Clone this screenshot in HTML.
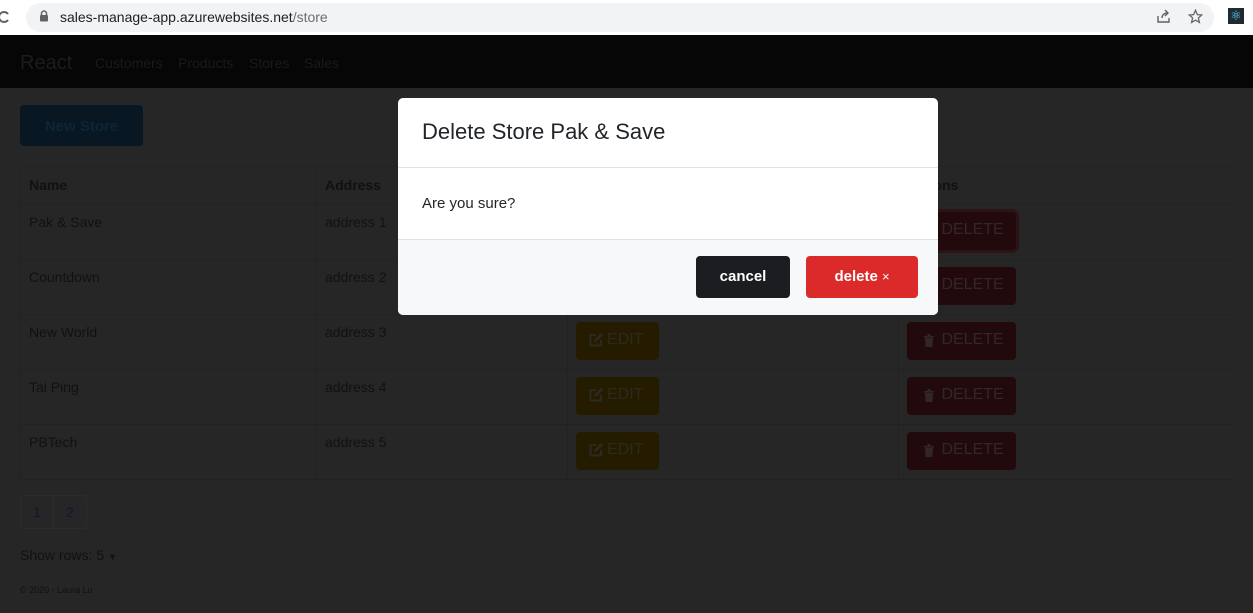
<!DOCTYPE html>
<html><head><style>
*{margin:0;padding:0;box-sizing:border-box}
body{width:1253px;height:613px;overflow:hidden;background:#262626;font-family:"Liberation Sans",sans-serif;position:relative}
.abs{position:absolute}
.top{left:0;top:0;width:1253px;height:35px;background:#fff}
.url{left:26px;top:3px;width:1188px;height:29px;background:#f1f3f4;border-radius:15px}
.nav{left:0;top:35px;width:1253px;height:53px;background:#060606}
.t{color:#111;font-size:14px}
.hl{background:#222;height:1px}
.vl{background:#222;width:1px}
.edit{background:#251c00;border-radius:4px;width:83px;height:38px;color:#2c2a20;font-size:16px;padding:9px 0 0 13px}
.edit svg,.del svg{vertical-align:-3px;margin-right:3px}
.del{background:#220a0c;border-radius:4px;width:109px;height:38px;color:#332628;font-size:16px;padding:9px 0 0 17px}
</style></head><body>
<div class="abs top"></div>
<svg class="abs" style="left:0;top:10px" width="10" height="14" viewBox="0 0 10 14"><path d="M8 4A5 5 0 1 0 8 10" stroke="#5f6368" stroke-width="2" fill="none"/></svg>
<div class="abs url"></div>
<svg class="abs" style="left:39px;top:10px" width="10" height="12" viewBox="0 0 10 12"><path d="M2.5 5V3.5a2.5 2.5 0 0 1 5 0V5" stroke="#5f6368" stroke-width="1.5" fill="none"/><rect x="1" y="5" width="8" height="6.5" rx="1" fill="#5f6368"/></svg>
<div class="abs" style="left:60px;top:9px;font-size:14px;color:#202124">sales-manage-app.azurewebsites.net<span style="color:#6b6e72">/store</span></div>
<svg class="abs" style="left:1156px;top:9px" width="15" height="15" viewBox="0 0 15 15"><path d="M2 7v6h11V9M6 9c0-3 2-5 6-5M9 1l3 3-3 3" stroke="#5f6368" stroke-width="1.4" fill="none"/></svg>
<svg class="abs" style="left:1188px;top:9px" width="15" height="15" viewBox="0 0 24 24"><path d="M12 2l3 7 7 .6-5.4 4.7 1.7 7.2L12 17.8 5.7 21.5l1.7-7.2L2 9.6 9 9z" stroke="#5f6368" stroke-width="2" fill="none"/></svg>
<div class="abs" style="left:1228px;top:8px;width:16px;height:16px;background:#1f2a33;color:#61dafb;font-size:13px;text-align:center;line-height:16px">⚛</div>
<div class="abs nav"></div>
<div class="abs" style="left:20px;top:52px;font-size:20px;color:#1c1c1c">React</div>
<div class="abs" style="left:95px;top:55px;font-size:14px;color:#1a1a1a">Customers</div>
<div class="abs" style="left:178px;top:55px;font-size:14px;color:#1a1a1a">Products</div>
<div class="abs" style="left:249px;top:55px;font-size:14px;color:#1a1a1a">Stores</div>
<div class="abs" style="left:304px;top:55px;font-size:14px;color:#1a1a1a">Sales</div>
<div class="abs" style="left:20px;top:105px;width:123px;height:41px;background:#081722;border-radius:4px;color:#0c2638;font-weight:bold;font-size:15px;text-align:center;line-height:43px">New Store</div>
<div class="abs hl" style="left:20px;top:166px;width:1213px"></div>
<div class="abs hl" style="left:20px;top:203px;width:1213px"></div>
<div class="abs hl" style="left:20px;top:259px;width:1213px"></div>
<div class="abs hl" style="left:20px;top:314px;width:1213px"></div>
<div class="abs hl" style="left:20px;top:369px;width:1213px"></div>
<div class="abs hl" style="left:20px;top:424px;width:1213px"></div>
<div class="abs hl" style="left:20px;top:479px;width:1213px"></div>
<div class="abs vl" style="left:20px;top:166px;height:314px"></div>
<div class="abs vl" style="left:316px;top:166px;height:314px"></div>
<div class="abs vl" style="left:567px;top:166px;height:314px"></div>
<div class="abs vl" style="left:898px;top:166px;height:314px"></div>
<div class="abs t" style="left:29px;top:177px;font-weight:bold">Name</div>
<div class="abs t" style="left:325px;top:177px;font-weight:bold">Address</div>
<div class="abs t" style="left:907px;top:177px;font-weight:bold">Actions</div>
<div class="abs t" style="left:29px;top:214px">Pak &amp; Save</div><div class="abs t" style="left:325px;top:214px">address 1</div>
<div class="abs t" style="left:29px;top:269px">Countdown</div><div class="abs t" style="left:325px;top:269px">address 2</div>
<div class="abs t" style="left:29px;top:324px">New World</div><div class="abs t" style="left:325px;top:324px">address 3</div>
<div class="abs t" style="left:29px;top:379px">Tai Ping</div><div class="abs t" style="left:325px;top:379px">address 4</div>
<div class="abs t" style="left:29px;top:434px">PBTech</div><div class="abs t" style="left:325px;top:434px">address 5</div>
<div class="abs edit" style="left:576px;top:212px"><svg width="15" height="15" viewBox="0 0 15 15"><path d="M7 3H1.5v10.5H12V8" stroke="#2c2a20" stroke-width="2" fill="none"/><path d="M5 10l1-3 6-6 2 2-6 6z" fill="#2c2a20"/></svg>EDIT</div>
<div class="abs edit" style="left:576px;top:267px"><svg width="15" height="15" viewBox="0 0 15 15"><path d="M7 3H1.5v10.5H12V8" stroke="#2c2a20" stroke-width="2" fill="none"/><path d="M5 10l1-3 6-6 2 2-6 6z" fill="#2c2a20"/></svg>EDIT</div>
<div class="abs edit" style="left:576px;top:322px"><svg width="15" height="15" viewBox="0 0 15 15"><path d="M7 3H1.5v10.5H12V8" stroke="#2c2a20" stroke-width="2" fill="none"/><path d="M5 10l1-3 6-6 2 2-6 6z" fill="#2c2a20"/></svg>EDIT</div>
<div class="abs edit" style="left:576px;top:377px"><svg width="15" height="15" viewBox="0 0 15 15"><path d="M7 3H1.5v10.5H12V8" stroke="#2c2a20" stroke-width="2" fill="none"/><path d="M5 10l1-3 6-6 2 2-6 6z" fill="#2c2a20"/></svg>EDIT</div>
<div class="abs edit" style="left:576px;top:432px"><svg width="15" height="15" viewBox="0 0 15 15"><path d="M7 3H1.5v10.5H12V8" stroke="#2c2a20" stroke-width="2" fill="none"/><path d="M5 10l1-3 6-6 2 2-6 6z" fill="#2c2a20"/></svg>EDIT</div>
<div class="abs del" style="left:907px;top:212px;box-shadow:0 0 0 3px #2c1416"><svg width="10" height="13" viewBox="0 0 10 13"><path d="M0 2h10v1.5H0zM3.5 0h3v2h-3zM1 4h8l-.6 9H1.6z" fill="#332628"/></svg> DELETE</div>
<div class="abs del" style="left:907px;top:267px"><svg width="10" height="13" viewBox="0 0 10 13"><path d="M0 2h10v1.5H0zM3.5 0h3v2h-3zM1 4h8l-.6 9H1.6z" fill="#332628"/></svg> DELETE</div>
<div class="abs del" style="left:907px;top:322px"><svg width="10" height="13" viewBox="0 0 10 13"><path d="M0 2h10v1.5H0zM3.5 0h3v2h-3zM1 4h8l-.6 9H1.6z" fill="#332628"/></svg> DELETE</div>
<div class="abs del" style="left:907px;top:377px"><svg width="10" height="13" viewBox="0 0 10 13"><path d="M0 2h10v1.5H0zM3.5 0h3v2h-3zM1 4h8l-.6 9H1.6z" fill="#332628"/></svg> DELETE</div>
<div class="abs del" style="left:907px;top:432px"><svg width="10" height="13" viewBox="0 0 10 13"><path d="M0 2h10v1.5H0zM3.5 0h3v2h-3zM1 4h8l-.6 9H1.6z" fill="#332628"/></svg> DELETE</div>
<div class="abs" style="left:20px;top:495px;width:67px;height:34px;border:1px solid #2c2c2c;border-radius:3px"></div>
<div class="abs vl" style="left:53px;top:495px;height:34px;background:#2c2c2c"></div>
<div class="abs" style="left:33px;top:504px;font-size:14px;color:#0b1a33">1</div>
<div class="abs" style="left:66px;top:504px;font-size:14px;color:#0b1a33">2</div>
<div class="abs" style="left:20px;top:547px;font-size:14px;color:#111">Show rows: 5 <span style="font-size:9px">▼</span></div>
<div class="abs" style="left:20px;top:585px;font-size:9px;color:#111">© 2020 - Laura Lu</div>
<div class="abs" style="left:398px;top:98px;width:540px;height:217px;background:#fff;border-radius:5px;overflow:hidden">
 <div style="height:70px;border-bottom:1px solid #dee2e6;padding:21px 0 0 24px;font-size:22px;color:#212529">Delete Store Pak &amp; Save</div>
 <div style="height:72px;border-bottom:1px solid #dee2e6;padding:27px 0 0 24px;font-size:15px;color:#212529">Are you sure?</div>
 <div style="height:75px;background:#f7f8fa;position:relative">
  <div class="abs" style="left:298px;top:16px;width:94px;height:42px;background:#1c1d20;border-radius:4px;color:#fff;font-weight:bold;font-size:15px;text-align:center;line-height:42px">cancel</div>
  <div class="abs" style="left:408px;top:16px;width:112px;height:42px;background:#dc2a2a;border-radius:4px;color:#fff;font-weight:bold;font-size:15px;text-align:center;line-height:42px">delete <span style="font-weight:normal;font-size:13px">×</span></div>
 </div>
</div>
</body></html>
